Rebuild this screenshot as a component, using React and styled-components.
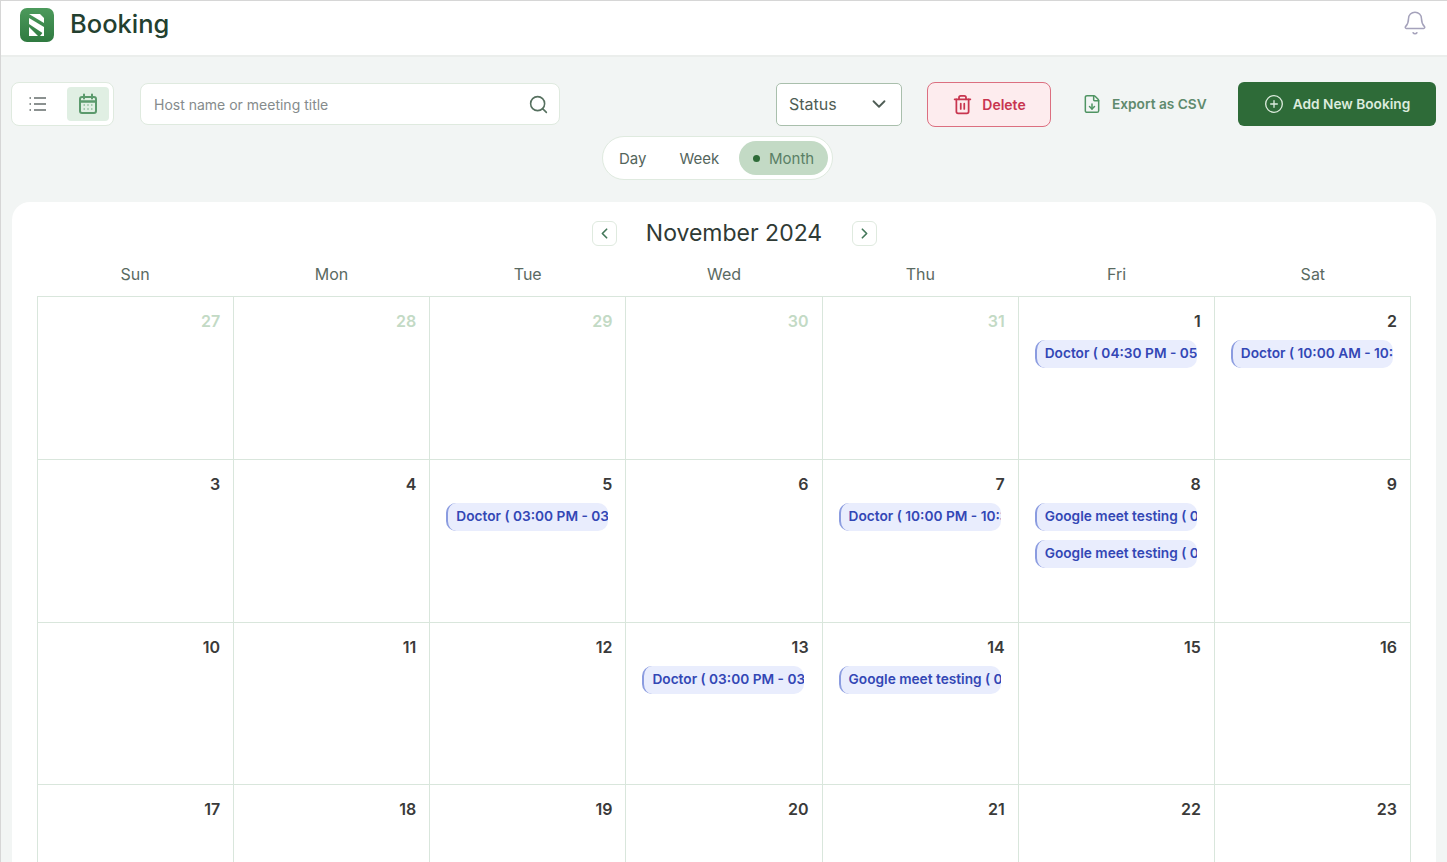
import React from 'react';
import styled, { createGlobalStyle } from 'styled-components';
import { Search, ChevronDown, ChevronLeft, ChevronRight, Trash2, FileDown, CirclePlus, Bell } from 'lucide-react';

const GlobalStyle = createGlobalStyle`
  html, body {
    margin: 0;
    height: 100%;
    overflow: hidden;
    background: #f2f5f4;
    font-family: "Inter", "Liberation Sans", sans-serif;
  }
  * { box-sizing: border-box; }
`;

const Page = styled.div`
  height: 862px;
  overflow: hidden;
  border-top: 1px solid #d6d6d6;
  border-left: 1px solid #d6d6d6;
`;

const Header = styled.header`
  height: 56px;
  background: #fff;
  border-bottom: 2px solid #ebeeec;
  display: flex;
  align-items: center;
  justify-content: space-between;
  padding: 0 19px 6px 18px;
`;

const Brand = styled.div`
  display: flex;
  align-items: center;
  gap: 15px;
`;

const Title = styled.h1`
  margin: 0 0 4px;
  font-size: 25.5px;
  font-weight: 500;
  color: #23402f;
`;

const BellIcon = styled(Bell)`
  color: #a5a2bb;
  margin-bottom: 5px;
`;

const Toolbar = styled.div`
  display: flex;
  align-items: center;
  height: 44px;
  margin: 25px 11px 0 10px;
`;

const ViewSwitch = styled.div`
  width: 103px;
  height: 44px;
  background: #fff;
  border: 1.5px solid #dfeadf;
  border-radius: 8px;
  display: flex;
  align-items: center;
  justify-content: space-between;
  padding: 4px 4px 4px 5px;
  margin-right: 26px;
`;

const ViewButton = styled.div`
  width: 42px;
  height: 34px;
  border-radius: 4px;
  display: flex;
  align-items: center;
  justify-content: center;
  background: ${p => (p.$active ? '#e0efe3' : 'transparent')};
`;

const SearchBox = styled.div`
  width: 420px;
  height: 42px;
  background: #fff;
  border: 1.5px solid #dfeadf;
  border-radius: 8px;
  display: flex;
  align-items: center;
  justify-content: space-between;
  padding: 0 10px 0 13px;
  font-size: 14px;
  color: #858b8c;
`;

const SearchIcon = styled(Search)`
  color: #56705f;
`;

const StatusSelect = styled.div`
  width: 126px;
  height: 43px;
  margin-left: auto;
  background: #fff;
  border: 1.5px solid #a9bfac;
  border-radius: 5px;
  display: flex;
  align-items: center;
  justify-content: space-between;
  padding: 0 11px 0 12px;
  font-size: 16px;
  color: #4f5d55;
`;

const DeleteButton = styled.div`
  width: 124px;
  height: 45px;
  margin-left: 25px;
  background: #fdecee;
  border: 1.5px solid #dc6f80;
  border-radius: 8px;
  display: flex;
  align-items: center;
  justify-content: center;
  gap: 9px;
  font-size: 14px;
  font-weight: 600;
  color: #c8354f;
`;

const ExportButton = styled.div`
  width: 124px;
  margin-left: 31px;
  display: flex;
  align-items: center;
  gap: 10px;
  font-size: 13.7px;
  font-weight: 600;
  color: #5f8a6d;
  white-space: nowrap;
  svg { color: #4f9462; flex: none; }
`;

const AddButton = styled.div`
  width: 198px;
  height: 44px;
  margin-left: 32px;
  background: #2e6b38;
  border-radius: 6px;
  display: flex;
  align-items: center;
  justify-content: center;
  gap: 9px;
  font-size: 13.7px;
  font-weight: 600;
  color: #dcebdd;
`;

const SegmentRow = styled.div`
  display: flex;
  justify-content: center;
  margin: 10px 13px 0 0;
`;

const Segment = styled.div`
  width: 231px;
  height: 44px;
  background: #fff;
  border: 1.5px solid #dfeadf;
  border-radius: 22px;
  display: flex;
  align-items: center;
  padding: 0 4px 0 16px;
  font-size: 15px;
  color: #54655c;
`;

const SegmentItem = styled.span`
  margin-right: 33px;
`;

const ActiveSegment = styled.div`
  width: 89px;
  height: 34px;
  margin-left: -13px;
  border-radius: 17px;
  background: #c3dac5;
  color: #5a8066;
  display: flex;
  align-items: center;
  justify-content: center;
  gap: 9px;
`;

const Dot = styled.span`
  width: 7px;
  height: 7px;
  border-radius: 50%;
  background: #2e6b38;
`;

const Card = styled.main`
  margin: 22px 11px 0 11px;
  background: #fff;
  border-radius: 18px 18px 0 0;
  padding: 17px 25px 0 25px;
`;

const MonthNav = styled.div`
  display: flex;
  align-items: center;
  justify-content: center;
  height: 28px;
  margin-left: 20px;
`;

const MonthTitle = styled.div`
  width: 235px;
  text-align: center;
  font-size: 23px;
  font-weight: 400;
  color: #2f3a35;
`;

const NavButton = styled.div`
  width: 25px;
  height: 25px;
  border: 1.5px solid #dfeadf;
  border-radius: 6px;
  display: flex;
  align-items: center;
  justify-content: center;
  color: #44785a;
`;

const Weekdays = styled.div`
  display: grid;
  grid-template-columns: repeat(7, 1fr);
  margin-top: 17px;
  height: 32px;
`;

const Weekday = styled.div`
  text-align: center;
  font-size: 16px;
  color: #5a6a62;
  line-height: 20px;
`;

const Grid = styled.div`
  display: grid;
  grid-template-columns: repeat(7, 1fr);
  grid-auto-rows: 162.8px;
  border-top: 1.5px solid #d9e6dc;
  border-left: 1.5px solid #d9e6dc;
`;

const Cell = styled.div`
  border-right: 1.5px solid #d9e6dc;
  border-bottom: 1.5px solid #d9e6dc;
  padding: 14px 13px 0 16px;
  min-width: 0;
`;

const DayNumber = styled.div`
  text-align: right;
  font-size: 16px;
  font-weight: 600;
  line-height: 20px;
  margin-bottom: 9px;
  color: ${p => (p.$muted ? '#c3dac5' : '#3a3a3a')};
`;

const EventChip = styled.div`
  width: 162px;
  height: 28px;
  margin-bottom: 9px;
  padding: 0 0 0 8px;
  background: #e9edfd;
  border-left: 2px solid #8b9ce0;
  border-radius: 10px;
  font-size: 13.7px;
  font-weight: 600;
  line-height: 27px;
  color: #3347b5;
  white-space: nowrap;
  overflow: hidden;
`;

const Logo = () => (
  <svg width="36" height="36" viewBox="0 0 36 36">
    <defs>
      <linearGradient id="logoGrad" x1="0" y1="0" x2="0" y2="1">
        <stop offset="0" stopColor="#4c9a5c" />
        <stop offset="1" stopColor="#2f7a40" />
      </linearGradient>
    </defs>
    <rect x="1" y="1" width="34" height="34" rx="7" fill="url(#logoGrad)" />
    <path d="M10 7h11l4 4v5z" fill="#fff" />
    <path d="M10 11l15 9v7L10 17z" fill="#fff" />
    <path d="M10 20l9 9h-9z" fill="#fff" />
    <path d="M25 24v5h-4z" fill="#fff" />
  </svg>
);

const ListIcon = () => (
  <svg width="20" height="20" viewBox="0 0 20 20" fill="none" stroke="#8b9190" strokeWidth="2">
    <path d="M6 4h12M6 10h12M6 16h12" />
    <path d="M1.5 4h1.5M1.5 10h1.5M1.5 16h1.5" />
  </svg>
);

const CalendarIcon = () => (
  <svg width="22" height="22" viewBox="0 0 22 22" fill="none" stroke="#5b9a6c" strokeWidth="2">
    <rect x="3" y="4" width="16" height="16" rx="2" />
    <path d="M7 1.5v4M15 1.5v4" strokeLinecap="round" />
    <path d="M3 8.5h16" strokeWidth="2.5" />
    <path d="M6.5 12h9M6.5 16h9" strokeWidth="1.5" strokeDasharray="1.5 2.25" stroke="#8dbd9a" />
  </svg>
);

const weekdays = ['Sun', 'Mon', 'Tue', 'Wed', 'Thu', 'Fri', 'Sat'];

const days = [
  { n: 27, muted: true }, { n: 28, muted: true }, { n: 29, muted: true }, { n: 30, muted: true }, { n: 31, muted: true },
  { n: 1, events: ['Doctor ( 04:30 PM - 05:00 PM )'] },
  { n: 2, events: ['Doctor ( 10:00 AM - 10:30 AM )'] },
  { n: 3 }, { n: 4 },
  { n: 5, events: ['Doctor ( 03:00 PM - 03:30 PM )'] },
  { n: 6 },
  { n: 7, events: ['Doctor ( 10:00 PM - 10:30 PM )'] },
  { n: 8, events: ['Google meet testing ( 02:00 PM )', 'Google meet testing ( 03:00 PM )'] },
  { n: 9 }, { n: 10 }, { n: 11 }, { n: 12 },
  { n: 13, events: ['Doctor ( 03:00 PM - 03:30 PM )'] },
  { n: 14, events: ['Google meet testing ( 02:00 PM )'] },
  { n: 15 }, { n: 16 }, { n: 17 }, { n: 18 }, { n: 19 }, { n: 20 }, { n: 21 }, { n: 22 }, { n: 23 },
];

function App() {
  return (
    <Page>
      <GlobalStyle />
      <Header>
        <Brand>
          <Logo />
          <Title>Booking</Title>
        </Brand>
        <BellIcon size={26} strokeWidth={1.4} />
      </Header>

      <Toolbar>
        <ViewSwitch>
          <ViewButton><ListIcon /></ViewButton>
          <ViewButton $active><CalendarIcon /></ViewButton>
        </ViewSwitch>
        <SearchBox>
          Host name or meeting title
          <SearchIcon size={21} strokeWidth={1.8} />
        </SearchBox>
        <StatusSelect>
          Status
          <ChevronDown size={22} strokeWidth={2} />
        </StatusSelect>
        <DeleteButton>
          <Trash2 size={21} strokeWidth={2} />
          Delete
        </DeleteButton>
        <ExportButton>
          <FileDown size={20} strokeWidth={1.8} />
          Export as CSV
        </ExportButton>
        <AddButton>
          <CirclePlus size={20} strokeWidth={1.6} />
          Add New Booking
        </AddButton>
      </Toolbar>

      <SegmentRow>
        <Segment>
          <SegmentItem>Day</SegmentItem>
          <SegmentItem>Week</SegmentItem>
          <ActiveSegment><Dot />Month</ActiveSegment>
        </Segment>
      </SegmentRow>

      <Card>
        <MonthNav>
          <NavButton><ChevronLeft size={17} strokeWidth={2.4} /></NavButton>
          <MonthTitle>November 2024</MonthTitle>
          <NavButton><ChevronRight size={17} strokeWidth={2.4} /></NavButton>
        </MonthNav>
        <Weekdays>
          {weekdays.map(d => <Weekday key={d}>{d}</Weekday>)}
        </Weekdays>
        <Grid>
          {days.map(d => (
            <Cell key={`${d.n}-${d.muted ? 'prev' : 'cur'}`}>
              <DayNumber $muted={d.muted}>{d.n}</DayNumber>
              {(d.events || []).map((e, i) => <EventChip key={i}>{e}</EventChip>)}
            </Cell>
          ))}
        </Grid>
      </Card>
    </Page>
  );
}

export default App;
